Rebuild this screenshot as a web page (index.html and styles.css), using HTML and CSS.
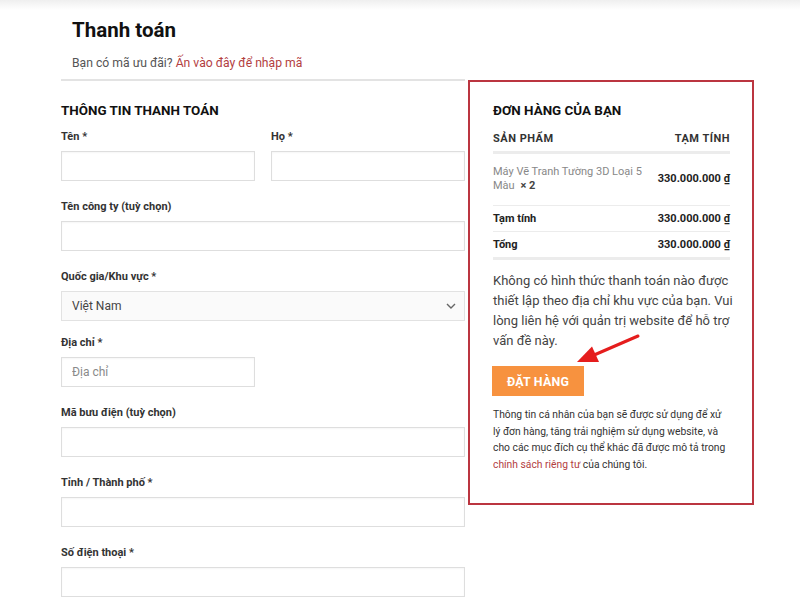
FILE: index.html
```html
<!DOCTYPE html>
<html lang="vi">
<head>
<meta charset="utf-8">
<title>Thanh toán</title>
<link rel="stylesheet" href="styles.css">
</head>
<body>
<div class="page">
  <div class="page-head">
    <h1 class="title">Thanh toán</h1>
    <p class="coupon">Bạn có mã ưu đãi? <a href="#" class="link">Ấn vào đây để nhập mã</a></p>
  </div>
  <div class="columns">
    <form class="billing">
      <h3 class="section-title">THÔNG TIN THANH TOÁN</h3>
      <div class="field-row">
        <div class="field">
          <label class="label">Tên *</label>
          <input class="input" type="text">
        </div>
        <div class="field">
          <label class="label">Họ *</label>
          <input class="input" type="text">
        </div>
      </div>
      <div class="field">
        <label class="label">Tên công ty (tuỳ chọn)</label>
        <input class="input" type="text">
      </div>
      <div class="field field-select">
        <label class="label">Quốc gia/Khu vực *</label>
        <div class="select">
          <span>Việt Nam</span>
          <svg class="chevron" width="10" height="6" viewBox="0 0 10 6"><path d="M1 1 L5 5 L9 1" fill="none" stroke="#666" stroke-width="1.4"/></svg>
        </div>
      </div>
      <div class="field">
        <label class="label">Địa chỉ *</label>
        <input class="input input-half" type="text" placeholder="Địa chỉ">
      </div>
      <div class="field">
        <label class="label">Mã bưu điện (tuỳ chọn)</label>
        <input class="input" type="text">
      </div>
      <div class="field">
        <label class="label">Tỉnh / Thành phố *</label>
        <input class="input" type="text">
      </div>
      <div class="field">
        <label class="label">Số điện thoại *</label>
        <input class="input" type="text">
      </div>
    </form>
    <aside class="order">
      <h3 class="section-title">ĐƠN HÀNG CỦA BẠN</h3>
      <table class="order-table">
        <thead>
          <tr class="row-head"><th class="left">SẢN PHẨM</th><th class="right">TẠM TÍNH</th></tr>
        </thead>
        <tbody>
          <tr class="row-item"><td class="left product">Máy Vẽ Tranh Tường 3D Loại 5 Màu <strong class="qty">× 2</strong></td><td class="right amount">330.000.000&nbsp;₫</td></tr>
          <tr class="row-sum"><th class="left">Tạm tính</th><td class="right amount">330.000.000&nbsp;₫</td></tr>
          <tr class="row-sum row-total"><th class="left">Tổng</th><td class="right amount">330.000.000&nbsp;₫</td></tr>
        </tbody>
      </table>
      <p class="notice">Không có hình thức thanh toán nào được thiết lập theo địa chỉ khu vực của bạn. Vui lòng liên hệ với quản trị website để hỗ trợ vấn đề này.</p>
      <button class="place-order" type="button">ĐẶT HÀNG</button>
      <p class="privacy">Thông tin cá nhân của bạn sẽ được sử dụng để xử lý đơn hàng, tăng trải nghiệm sử dụng website, và cho các mục đích cụ thể khác đã được mô tả trong <a href="#" class="link">chính sách riêng tư</a> của chúng tôi.</p>
      <svg class="arrow" width="72" height="38" viewBox="0 0 72 38">
        <line x1="66" y1="5" x2="21" y2="24.5" stroke="#e51d1d" stroke-width="3" stroke-linecap="round"/>
        <polygon points="5,31 20,15.5 27,31" fill="#e51d1d"/>
      </svg>
    </aside>
  </div>
</div>
</body>
</html>
```

FILE: styles.css
```css
* { box-sizing: border-box; }

html, body {
  margin: 0;
  padding: 0;
}

body {
  font-family: Roboto, "Noto Sans", Arial, sans-serif;
  color: #333;
  background: #fff linear-gradient(#efefef, #fff 10px) no-repeat;
  width: 800px;
  height: 606px;
  overflow: hidden;
}

.page {
  padding: 17px 0 0 61px;
}

.page-head {
  padding-left: 11px;
  padding-bottom: 6px;
}

.title {
  margin: 0;
  font-size: 20.5px;
  line-height: 26px;
  font-weight: 700;
  color: #111;
}

.coupon {
  margin: 10px 0 0;
  font-size: 12.2px;
  line-height: 20px;
  color: #555;
}

.link {
  color: #b3403f;
  text-decoration: none;
}

.columns {
  display: flex;
  align-items: flex-start;
  gap: 3px;
}

.billing {
  width: 404px;
  border-top: 2px solid #e3e3e3;
  padding-top: 20px;
}

.section-title {
  margin: 0;
  font-size: 13.4px;
  line-height: 20px;
  font-weight: 700;
  color: #111;
}

.billing .section-title {
  margin-bottom: 7px;
}

.field-row {
  display: grid;
  grid-template-columns: 1fr 1fr;
  gap: 16px;
}

.field {
  display: flex;
  flex-direction: column;
  margin-bottom: 17px;
}

.field-select {
  margin-bottom: 13px;
}

.label {
  font-size: 11px;
  line-height: 18px;
  font-weight: 700;
  color: #333;
  margin-bottom: 5px;
}

.input {
  height: 30px;
  width: 100%;
  border: 1px solid #dedede;
  box-shadow: inset 0 1px 2px rgba(0, 0, 0, 0.04);
  background: #fff;
  font-family: Roboto, "Noto Sans", Arial, sans-serif;
  font-size: 12px;
  padding: 0 10px;
  color: #333;
  outline: none;
  margin: 0;
}

.input::placeholder {
  color: #8a8a8a;
}

.input-half {
  width: 194px;
}

.select {
  height: 30px;
  border: 1px solid #e2e2e2;
  background: #fafafa;
  display: flex;
  align-items: center;
  justify-content: space-between;
  padding: 0 8px 0 10px;
  font-size: 12px;
  color: #444;
}

.chevron {
  display: block;
}

.order {
  position: relative;
  width: 286px;
  margin-top: 1px;
  border: 2px solid #bb3540;
  padding: 19px 22px 30px 23px;
}

.order .section-title {
  margin-bottom: 5px;
}

.order-table {
  width: 100%;
  border-collapse: collapse;
  font-size: 11px;
  line-height: 14px;
}

.order-table th,
.order-table td {
  padding: 0;
}

.left { text-align: left; }
.right { text-align: right; }

.row-head th {
  font-weight: 700;
  letter-spacing: 0.5px;
  color: #333;
  padding: 6px 0 5px;
  border-bottom: 3px solid #ececec;
}

.row-item td {
  padding: 11px 0 12px;
  border-bottom: 1px solid #ececec;
  vertical-align: middle;
}

.product {
  color: #888;
  padding-right: 10px !important;
}

.qty {
  color: #444;
  font-weight: 700;
  margin-left: 3px;
}

.amount {
  font-weight: 700;
  color: #222;
  white-space: nowrap;
}

.row-sum th,
.row-sum td {
  padding: 6px 0 5px;
  border-bottom: 1px solid #ececec;
  font-weight: 700;
  color: #222;
}

.row-total th,
.row-total td {
  border-bottom: 3px solid #ececec;
}

.notice {
  margin: 11px -8px 15px 0;
  font-size: 13px;
  line-height: 20px;
  color: #444;
}

.place-order {
  display: block;
  height: 30px;
  width: 92px;
  margin-left: -1px;
  padding: 0;
  border: none;
  background: #f7923f;
  color: #fff;
  font-family: Roboto, "Noto Sans", Arial, sans-serif;
  font-size: 12.4px;
  font-weight: 700;
  letter-spacing: 0.2px;
}

.privacy {
  margin: 11px 0 0;
  font-size: 10.3px;
  line-height: 16.5px;
  color: #333;
}

.arrow {
  position: absolute;
  left: 102px;
  top: 249px;
}
```
